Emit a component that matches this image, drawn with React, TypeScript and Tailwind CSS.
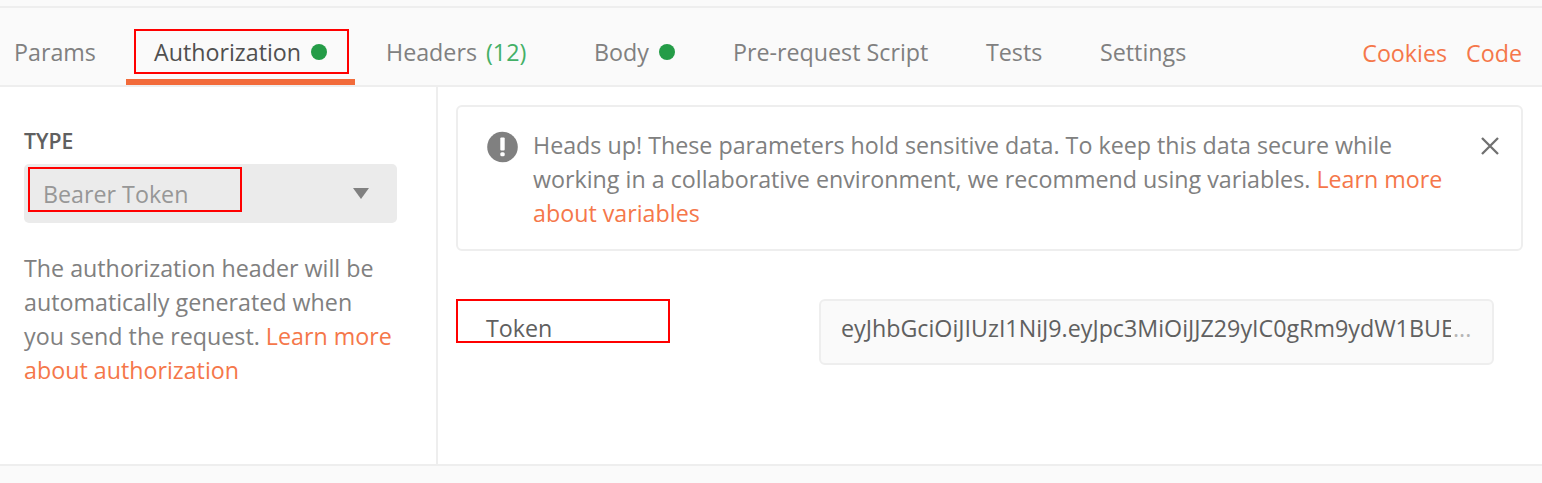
import React from "react";

type TabProps = {
  label: string;
  className: string;
  count?: string;
  dot?: boolean;
  active?: boolean;
};

function Tab({ label, className, count, dot, active }: TabProps) {
  return (
    <button
      className={`relative flex h-full shrink-0 items-center whitespace-nowrap ${active ? "border-b-6 border-[#f26b3a] pt-[16px] text-[#505050]" : "pt-[10px]"} ${className}`}
    >
      <span>{label}</span>
      {count && <span className="ml-[9px] text-[#43b067]">{count}</span>}
      {dot && <span className="ml-[10px] mt-px size-4 rounded-full bg-[#249c47]" />}
      {active && (
        <span className="pointer-events-none absolute left-2 top-[21px] h-[45px] w-[215px] border-2 border-[#f00]" />
      )}
    </button>
  );
}

export default function App() {
  return (
    <div className="flex h-[483px] w-[1542px] flex-col overflow-hidden bg-white font-['Open_Sans',sans-serif] text-[23.26px] leading-[34px] text-[#808080]">
      <div className="h-2 shrink-0 border-b-2 border-[#eeeeee] bg-[#fafafa]" />
      <header className="flex h-[79px] shrink-0 border-b-2 border-[#eeeeee] bg-[#fafafa]">
        <nav className="flex h-full">
          <Tab label="Params" className="w-[126px] pl-[14px]" />
          <Tab label="Authorization" className="w-[229px] pl-7" dot active />
          <Tab label="Headers" count="(12)" className="w-[209px] pl-[31px]" />
          <Tab label="Body" className="w-[138px] pl-[30px]" dot />
          <Tab label="Pre-request Script" className="w-[256px] pl-[31px]" />
          <Tab label="Tests" className="w-[113px] pl-7" />
          <Tab label="Settings" className="w-[143px] pl-[29px]" />
        </nav>
        <div className="ml-auto mr-5 flex items-center gap-[19px] pt-[13px] text-[#f5774a]">
          <button>Cookies</button>
          <button>Code</button>
        </div>
      </header>

      <main className="flex min-h-0 flex-1">
        <aside className="w-[438px] shrink-0 border-r-2 border-[#eeeeee] pl-6 pt-[37px]">
          <h2 className="text-[21.2px] font-semibold text-[#606060]">TYPE</h2>
          <button className="relative mt-[6px] flex h-[59px] w-[373px] items-center justify-between rounded-[5px] bg-[#ebebeb] pl-[19px] pr-[28px] text-[#979797]">
            <span>Bearer Token</span>
            <svg width="16" height="11" viewBox="0 0 16 11">
              <path d="M0 0h16L8 11z" fill="#808080" />
            </svg>
            <span className="pointer-events-none absolute left-1 top-[3px] h-[45px] w-[214px] border-2 border-[#f00]" />
          </button>
          <p className="mt-[28px] w-[380px] whitespace-nowrap">
            The authorization header will be
            <br />
            automatically generated when
            <br />
            you send the request. <a className="text-[#f5774a]">Learn more
            <br />
            about authorization</a>
          </p>
        </aside>

        <section className="flex-1 pl-[18px] pt-[18px]">
          <div className="flex h-[146px] w-[1067px] items-start rounded-md border-2 border-[#eeeeee] pl-[29px] pr-[22px] pt-[21px]">
            <svg className="mt-[3px] shrink-0" width="32" height="32" viewBox="0 0 32 32">
              <circle cx="15.5" cy="16" r="15.3" fill="#808080" />
              <rect x="13.3" y="6.5" width="4.4" height="13" rx="1" fill="#fff" />
              <rect x="13.3" y="21.3" width="4.4" height="4" rx="1.5" fill="#fff" />
            </svg>
            <p className="ml-[14px] whitespace-nowrap">
              Heads up! These parameters hold sensitive data. To keep this data secure while
              <br />
              working in a collaborative environment, we recommend using variables. <a className="text-[#f5774a]">Learn more
              <br />
              about variables</a>
            </p>
            <svg className="ml-auto mt-[9px] shrink-0" width="18" height="18" viewBox="0 0 18 18">
              <path d="M1 1L17 17M17 1L1 17" stroke="#707070" strokeWidth="2.3" />
            </svg>
          </div>
          <div className="relative mt-12 flex h-[66px] w-[1038px] text-[#606060]">
            <label className="w-[363px] pl-[30px] pt-[12px]">Token</label>
            <div className="flex h-full flex-1 rounded-md border-2 border-[#eeeeee] bg-[#fafafa] pl-5 pt-[10px]">
              <span className="w-[610px] overflow-hidden whitespace-nowrap">eyJhbGciOiJIUzI1NiJ9.eyJpc3MiOiJJZ29yIC0gRm9ydW1BUE</span>
              <span className="ml-[2px] text-[#b5b5b5]">...</span>
            </div>
            <span className="pointer-events-none absolute left-0 top-0 h-[44px] w-[214px] border-2 border-[#f00]" />
          </div>
        </section>
      </main>
      <footer className="h-[19px] shrink-0 border-t-2 border-[#eeeeee] bg-[#fafafa]" />
    </div>
  );
}
